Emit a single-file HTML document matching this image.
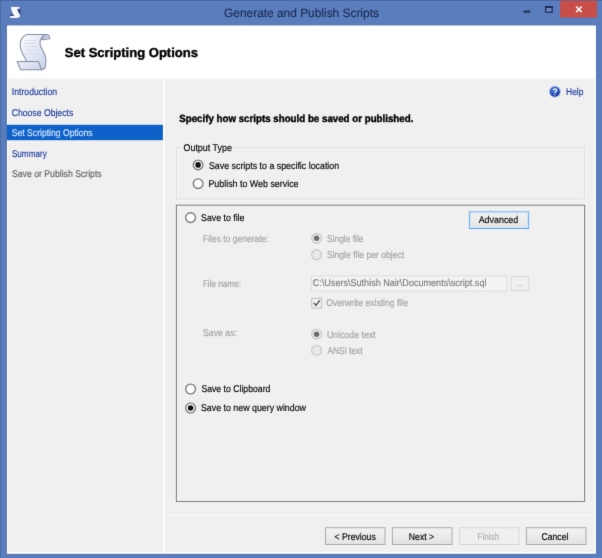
<!DOCTYPE html>
<html>
<head>
<meta charset="utf-8">
<title>Generate and Publish Scripts</title>
<style>
html,body{margin:0;padding:0;}
body{width:602px;height:558px;overflow:hidden;background:#5a7ebd;font-family:"Liberation Sans",sans-serif;font-size:10px;color:#000;position:relative;filter:url(#soft);}
#bg{position:absolute;left:0;top:0;width:602px;height:558px;display:block;}
.t{position:absolute;white-space:nowrap;transform-origin:0 50%;text-rendering:geometricPrecision;-webkit-text-stroke:0.15px;}
</style>
</head>
<body>
<svg id="bg" width="602" height="558" viewBox="0 0 602 558">
<defs>
<filter id="soft" x="0" y="0" width="100%" height="100%" color-interpolation-filters="sRGB"><feConvolveMatrix order="3" kernelMatrix="0.01 0.07 0.01 0.07 0.68 0.07 0.01 0.07 0.01" edgeMode="duplicate" preserveAlpha="true"/></filter>
<linearGradient id="gb" x1="0" y1="0" x2="0" y2="1"><stop offset="0" stop-color="#f3f3f3"/><stop offset="1" stop-color="#e3e3e3"/></linearGradient>
<linearGradient id="gs" x1="0" y1="0" x2="1" y2="1"><stop offset="0" stop-color="#ffffff"/><stop offset="1" stop-color="#c9d2ea"/></linearGradient>
<radialGradient id="gh" cx="0.4" cy="0.3" r="0.8"><stop offset="0" stop-color="#4f7fe0"/><stop offset="1" stop-color="#0f2f9e"/></radialGradient>
</defs>
<!-- frame -->
<rect x="0" y="0" width="602" height="558" fill="#5a7ebd"/>
<rect x="0" y="0" width="602" height="1" fill="#4666a6"/>
<rect x="0" y="0" width="1" height="558" fill="#4a6fa3"/>
<!-- window controls -->
<rect x="560.1" y="0.6" width="36.9" height="17" fill="#c94e48"/>
<path d="M576.1 6.5 L581.7 12.1 M581.7 6.5 L576.1 12.1" stroke="#fff" stroke-width="1.5" fill="none"/>
<rect x="523.5" y="10.6" width="6.8" height="2" fill="#1d2a52"/>
<rect x="545.6" y="6.6" width="6.6" height="5.6" fill="#6988c5" stroke="#1d2a52" stroke-width="1.2"/>
<rect x="545" y="6" width="7.8" height="2" fill="#1d2a52"/>
<!-- title icon -->
<path d="M16.8 8 L20.4 8 L20.6 15.8 L18.6 12 Z" fill="#33436f"/>
<path d="M9.9 14.2 L13.6 14.2 L14.6 16.4 L9.9 16.4 Z" fill="#3b4c7a"/>
<path d="M11 7 L18.5 7 C19.8 7 20.3 7.8 20.1 8.6 L17.3 8.9 C17.1 10.5 18.7 12.6 19.7 14.6 C20.5 16.2 20 17.3 18.8 17.4 L16.6 17.4 L16.6 16.3 C14.8 16.3 13.6 15.4 13.1 14 C12.5 12.4 11 10.2 11 7 Z" fill="#f8faff"/>
<path d="M9.8 16.1 L17.2 16.1 L17.6 18.1 L10.4 18.1 Z" fill="#f4f6fd"/>
<!-- content -->
<rect x="5.4" y="24.6" width="591.1" height="530" fill="#5473b0"/>
<rect x="6.9" y="25.4" width="589.1" height="528.4" fill="#ffffff"/>
<rect x="8" y="78.6" width="586.6" height="473.4" fill="#f0f0f0"/>
<!-- splitter -->
<rect x="162.9" y="78.6" width="2.3" height="474" fill="#fdfdfd"/>
<rect x="165.2" y="78.6" width="1" height="474" fill="#ebebeb"/>
<!-- selected nav -->
<rect x="6.8" y="124.8" width="156.1" height="15.4" fill="#0d61c8"/>
<!-- scroll icon -->
<g stroke="#858ca3" stroke-width="1.05" stroke-linejoin="round">
<path d="M27 34.5 C22 36 19.5 41 20.2 46 C21 53 25 57 26.6 61.4 L17.2 61.6 L20.6 69.7 L40.4 69.7 C44 69.5 45.5 68 45.3 66 C47 60 46 56 43 51 C40 46 39 43 40.5 40 C41.5 37 44 35 46.4 34.5 Z" fill="url(#gs)"/>
<path d="M44 35.2 C45 34.6 46 34.5 47 34.6 C49.5 35 50 37.5 49.6 38.8 L41.8 39.8 C42.2 37.8 43 36.2 44 35.2 Z" fill="#c6cfea"/>
<path d="M26.6 61.4 L38.5 61.4 L41.5 69.4" fill="none"/>
</g>
<g stroke="#d3d8e6" stroke-width="0.8" fill="none">
<path d="M25 40.5 L36 40.5 M24 43.5 L35.5 43.5 M24 46.5 L35.5 46.5 M25.5 50 L37 50 M27 53.5 L39 53.5"/>
</g>
<!-- help icon -->
<circle cx="554.9" cy="91.7" r="5.9" fill="#a9bbe6"/>
<circle cx="554.9" cy="91.7" r="5" fill="url(#gh)"/>
<path d="M553.4 90.3 C553.5 88.4 556.8 88.5 556.7 90.3 C556.6 91.5 555 91.7 554.9 93.1 M554.8 94.4 L554.8 95.3" stroke="#fff" stroke-width="1.25" fill="none"/>
<!-- group 1 -->
<rect x="177.5" y="148.8" width="408" height="51.2" fill="none" stroke="#fafafa" stroke-width="1"/>
<rect x="176.5" y="147.8" width="408" height="51.2" fill="none" stroke="#dddddd" stroke-width="1"/>
<rect x="181.5" y="146" width="52" height="4" fill="#f0f0f0"/>
<!-- group 2 -->
<rect x="177.3" y="206" width="406.4" height="294.6" fill="none" stroke="#fbfbfb" stroke-width="1"/>
<rect x="176.4" y="205.2" width="408.2" height="296.2" fill="none" stroke="#787878" stroke-width="1"/>
<!-- radios enabled -->
<g fill="#fff" stroke="#7a7a7a" stroke-width="1.35">
<circle cx="198.1" cy="164.9" r="4.8"/>
<circle cx="198.1" cy="183.7" r="4.8"/>
<circle cx="190.6" cy="217.6" r="4.9"/>
<circle cx="190.6" cy="389" r="4.9"/>
<circle cx="190.6" cy="408" r="4.9"/>
</g>
<g fill="#111">
<circle cx="198.1" cy="164.9" r="2.8"/>
<circle cx="190.6" cy="408" r="2.8"/>
</g>
<!-- radios disabled -->
<g fill="#e9e9e9" stroke="#c3c3c3" stroke-width="1.1">
<circle cx="316.6" cy="238.3" r="4.9"/>
<circle cx="316.6" cy="254.8" r="4.9"/>
<circle cx="316.6" cy="334.2" r="4.9"/>
<circle cx="316.6" cy="350.4" r="4.9"/>
</g>
<g fill="#6c6c6c">
<circle cx="316.6" cy="238.3" r="2.7"/>
<circle cx="316.6" cy="334.2" r="2.7"/>
</g>
<!-- advanced button -->
<rect x="469.4" y="211.9" width="59.2" height="16.6" fill="url(#gb)" stroke="#5aa7ee" stroke-width="1"/>
<rect x="470.4" y="212.9" width="57.2" height="14.6" fill="none" stroke="#cfe6fb" stroke-width="1"/>
<!-- textbox -->
<rect x="311.4" y="275.9" width="195.2" height="15.2" fill="#f3f3f3" stroke="#dddddd" stroke-width="1"/>
<rect x="511.1" y="276.7" width="17.6" height="13.9" fill="#efefef" stroke="#d9d9d9" stroke-width="1"/>
<!-- checkbox -->
<rect x="311.8" y="298.2" width="9.8" height="9.8" fill="#f3f3f3" stroke="#bdbdbd" stroke-width="1"/>
<path d="M313.8 302.8 L316 305.4 L319.8 300.2" stroke="#585858" stroke-width="1.45" fill="none"/>
<!-- separator -->
<rect x="166" y="513.1" width="428.5" height="1" fill="#e9e9e9"/>
<rect x="166" y="514.1" width="428.5" height="1" fill="#fafafa"/>
<!-- bottom buttons -->
<g stroke="#a9a9a9" stroke-width="1" fill="url(#gb)">
<rect x="325.4" y="527.7" width="59.6" height="16.8"/>
<rect x="392.4" y="527.7" width="59.6" height="16.8"/>
<rect x="526.4" y="527.7" width="59.6" height="16.8"/>
</g>
<rect x="459.4" y="527.7" width="59.6" height="16.8" fill="#efefef" stroke="#d6d6d6" stroke-width="1"/>
</svg>
<div class="t" id="title" style="left:224px;top:5px;font-size:12px;line-height:16px;height:16px;color:#1c2a52;transform:translateX(0.04px) scaleX(0.9921)">Generate and Publish Scripts</div>
<div class="t" id="h1" style="left:64px;top:44px;font-size:13px;line-height:17px;height:17px;color:#000;transform:translateX(0.77px) scaleX(1.0025);font-weight:bold;-webkit-text-stroke:0.4px">Set Scripting Options</div>
<div class="t" id="n1" style="left:11px;top:86px;font-size:9.8px;line-height:14px;height:14px;color:#1c3c9c;transform:translateX(0.83px) scaleX(0.8851)">Introduction</div>
<div class="t" id="n2" style="left:11px;top:107px;font-size:9.8px;line-height:14px;height:14px;color:#1c3c9c;transform:translateX(0.68px) scaleX(0.8831)">Choose Objects</div>
<div class="t" id="n3" style="left:11px;top:127px;font-size:9.8px;line-height:14px;height:14px;color:#d4e6ff;transform:translateX(0.78px) scaleX(0.8790)">Set Scripting Options</div>
<div class="t" id="n4" style="left:11px;top:148px;font-size:9.8px;line-height:14px;height:14px;color:#1c3c9c;transform:translateX(0.89px) scaleX(0.8309)">Summary</div>
<div class="t" id="n5" style="left:11px;top:168px;font-size:9.8px;line-height:14px;height:14px;color:#616161;transform:translateX(0.94px) scaleX(0.8861)">Save or Publish Scripts</div>
<div class="t" id="help" style="left:566px;top:86px;font-size:9.8px;line-height:14px;height:14px;color:#1c3c9c;transform:translateX(0.08px) scaleX(0.8601)">Help</div>
<div class="t" id="spec" style="left:179px;top:113px;font-size:10.3px;line-height:14px;height:14px;color:#000;transform:translateX(0.23px) scaleX(0.9450);font-weight:bold;-webkit-text-stroke:0.4px">Specify how scripts should be saved or published.</div>
<div class="t" id="ot" style="left:183px;top:142px;font-size:9.8px;line-height:14px;height:14px;color:#000;transform:translateX(0.52px) scaleX(0.9082)">Output Type</div>
<div class="t" id="r1" style="left:208px;top:160px;font-size:9.8px;line-height:14px;height:14px;color:#000;transform:translateX(0.97px) scaleX(0.9020)">Save scripts to a specific location</div>
<div class="t" id="r2" style="left:208px;top:178px;font-size:9.8px;line-height:14px;height:14px;color:#000;transform:translateX(0.45px) scaleX(0.9054)">Publish to Web service</div>
<div class="t" id="r3" style="left:201px;top:212px;font-size:9.8px;line-height:14px;height:14px;color:#000;transform:translateX(0.06px) scaleX(0.8943)">Save to file</div>
<div class="t" id="adv" style="left:478px;top:214px;font-size:9.8px;line-height:14px;height:14px;color:#000;transform:translateX(0.68px) scaleX(0.9082)">Advanced</div>
<div class="t" id="ftg" style="left:202px;top:233px;font-size:9.8px;line-height:14px;height:14px;color:#a2a2a2;transform:translateX(0.96px) scaleX(0.8676)">Files to generate:</div>
<div class="t" id="sf" style="left:327px;top:233px;font-size:9.8px;line-height:14px;height:14px;color:#a2a2a2;transform:translateX(0.01px) scaleX(0.8574)">Single file</div>
<div class="t" id="sfpo" style="left:326px;top:249px;font-size:9.8px;line-height:14px;height:14px;color:#a2a2a2;transform:translateX(0.96px) scaleX(0.8743)">Single file per object</div>
<div class="t" id="fn" style="left:202px;top:278px;font-size:9.8px;line-height:14px;height:14px;color:#a2a2a2;transform:translateX(0.89px) scaleX(0.8316)">File name:</div>
<div class="t" id="path" style="left:312px;top:277px;font-size:9.8px;line-height:14px;height:14px;color:#7c7c7c;transform:translateX(0.75px) scaleX(0.9247)">C:\Users\Suthish Nair\Documents\script.sql</div>
<div class="t" id="ow" style="left:326px;top:297px;font-size:9.8px;line-height:14px;height:14px;color:#a2a2a2;transform:translateX(0.19px) scaleX(0.8782)">Overwrite existing file</div>
<div class="t" id="sa" style="left:202px;top:327px;font-size:9.8px;line-height:14px;height:14px;color:#a2a2a2;transform:translateX(0.93px) scaleX(0.8957)">Save as:</div>
<div class="t" id="ut" style="left:327px;top:329px;font-size:9.8px;line-height:14px;height:14px;color:#a2a2a2;transform:translateX(0.05px) scaleX(0.8902)">Unicode text</div>
<div class="t" id="at" style="left:327px;top:345px;font-size:9.8px;line-height:14px;height:14px;color:#a2a2a2;transform:translateX(0.42px) scaleX(0.8481)">ANSI text</div>
<div class="t" id="stc" style="left:201px;top:383px;font-size:9.8px;line-height:14px;height:14px;color:#000;transform:translateX(0.39px) scaleX(0.8862)">Save to Clipboard</div>
<div class="t" id="snq" style="left:200px;top:402px;font-size:9.8px;line-height:14px;height:14px;color:#000;transform:translateX(0.98px) scaleX(0.9006)">Save to new query window</div>
<div class="t" id="prev" style="left:334px;top:531px;font-size:9.8px;line-height:14px;height:14px;color:#000;transform:translateX(0.46px) scaleX(0.8865)">&lt; Previous</div>
<div class="t" id="next" style="left:408px;top:531px;font-size:9.8px;line-height:14px;height:14px;color:#000;transform:translateX(0.86px) scaleX(0.8835)">Next &gt;</div>
<div class="t" id="fin" style="left:477px;top:531px;font-size:9.8px;line-height:14px;height:14px;color:#adadad;transform:translateX(0.42px) scaleX(0.8329)">Finish</div>
<div class="t" id="can" style="left:541px;top:531px;font-size:9.8px;line-height:14px;height:14px;color:#000;transform:translateX(0.47px) scaleX(0.8832)">Cancel</div>
<div class="t" id="dots" style="left:516px;top:277px;font-size:9.8px;line-height:14px;height:14px;color:#b5b5b5;transform:translateX(0.93px) scaleX(0.7520)">...</div>
</body>
</html>
